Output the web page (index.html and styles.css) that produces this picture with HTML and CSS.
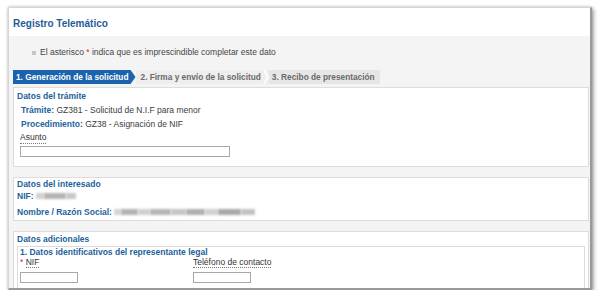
FILE: index.html
```html
<!DOCTYPE html>
<html lang="es">
<head>
<meta charset="utf-8">
<title>Registro Telemático</title>
<link rel="stylesheet" href="styles.css">
</head>
<body>
<div class="card">
  <div class="card-header">
    <h1 class="title">Registro Telemático</h1>
  </div>
  <div class="card-body">
    <p class="notice"><span class="bullet"></span><span>El asterisco <span class="req">*</span> indica que es imprescindible completar este dato</span></p>
    <div class="tabs">
      <span class="tab active">1. Generación de la solicitud</span>
      <span class="tab">2. Firma y envío de la solicitud</span>
      <svg class="sep" width="6" height="14" viewBox="0 0 6 14"><path d="M0.8 0 L5 7 L0.8 14" fill="none" stroke="#fff" stroke-width="1.5"/></svg>
      <span class="tab last">3. Recibo de presentación</span>
    </div>

    <section class="panel p1">
      <h2 class="panel-title">Datos del trámite</h2>
      <div class="row"><span class="lbl">Trámite:</span> GZ381 - Solicitud de N.I.F para menor</div>
      <div class="row"><span class="lbl">Procedimiento:</span> GZ38 - Asignación de NIF</div>
      <div class="field">
        <label class="flabel">Asunto</label>
        <span class="input wide"></span>
      </div>
    </section>

    <section class="panel p2">
      <h2 class="panel-title">Datos del interesado</h2>
      <div class="row2"><span class="lbl">NIF:</span><span class="blurs"><span class="blur n1"></span><span class="blur n2"></span><span class="blur n3"></span></span></div>
      <div class="row2 r-name"><span class="lbl">Nombre / Razón Social:</span><span class="blurs"><span class="blur b1"></span><span class="blur b2"></span><span class="blur b3"></span><span class="blur b4"></span><span class="blur b5"></span><span class="blur b6"></span><span class="blur b7"></span><span class="blur b8"></span><span class="blur b9"></span></span></div>
    </section>

    <section class="panel p3">
      <h2 class="panel-title">Datos adicionales</h2>
      <div class="sub">
        <h3 class="sub-title">1. Datos identificativos del representante legal</h3>
        <div class="cols">
          <div class="col">
            <label class="flabel2"><span class="req">*</span> <span class="u">NIF</span></label>
            <span class="input small"></span>
          </div>
          <div class="col">
            <label class="flabel2"><span class="u">Teléfono de contacto</span></label>
            <span class="input small"></span>
          </div>
        </div>
      </div>
    </section>
  </div>
</div>
</body>
</html>
```

FILE: styles.css
```css
* { box-sizing: border-box; }
html, body { margin: 0; padding: 0; background: #fff; }
body {
  font-family: "Liberation Sans", Arial, sans-serif;
  font-size: 8.5px;
  color: #3c3c3c;
}
.card {
  margin: 7px 0 0 8px;
  width: 584px;
  height: 283px;
  border: 1px solid #d6d6d6;
  border-right: 2px solid #9a9a9a;
  border-bottom: 2px solid #9a9a9a;
  box-shadow: 0 0 3px rgba(0,0,0,0.25), 2px 2px 4px rgba(0,0,0,0.3);
  overflow: hidden;
  background: #fff;
}
.card-header {
  height: 28px;
  padding: 9px 0 0 4px;
  background: #fff;
}
.title {
  margin: 0;
  font-size: 10px;
  line-height: 13px;
  font-weight: bold;
  color: #1f5c96;
}
.card-body {
  background: #f4f4f4;
  height: 260px;
  padding: 10px 1px 0 4px;
}
.notice {
  margin: 0 0 11px 0;
  padding-left: 19px;
  line-height: 13px;
  display: flex;
  align-items: center;
  color: #444;
}
.bullet {
  width: 4px;
  height: 4px;
  background: #c6c6c6;
  margin-right: 4px;
}
.req { color: #e0262d; }
.tabs {
  display: flex;
  align-items: center;
  height: 14px;
  margin-bottom: 3px;
}
.tab {
  height: 14px;
  line-height: 14px;
  font-size: 8.3px;
  font-weight: bold;
  color: #6a6a6a;
  padding: 0 2px 0 5px;
  background: #eeeeee;
  white-space: nowrap;
}
.tab.active {
  color: #fff;
  background: #1b63ad;
  padding: 0 7px 0 3px;
  clip-path: polygon(0 0, calc(100% - 5px) 0, 100% 50%, calc(100% - 5px) 100%, 0 100%);
}
.tab.last {
  background: #e6e6e6;
  padding: 0 5px 0 3px;
}
.sep { display: block; background: #eeeeee; }
.panel {
  background: #fff;
  border: 1px solid #dcdcdc;
  padding: 1px 3px 0 3px;
}
.panel-title {
  margin: 0;
  font-size: 8.5px;
  line-height: 13px;
  font-weight: bold;
  color: #215f9b;
}
.p1 { height: 80px; }
.p1 .panel-title { line-height: 14px; }
.p1 .row {
  padding-left: 4px;
  line-height: 14px;
}
.lbl { color: #2563a0; font-weight: bold; }
.field { padding-left: 3px; }
.flabel {
  display: inline-block;
  line-height: 11px;
  margin-top: 1px;
  border-bottom: 1px dotted #777;
  color: #333;
}
.input {
  display: block;
  height: 11px;
  border: 1px solid #a8a8a8;
  background: #fff;
}
.input.wide { width: 210px; margin-top: 2px; }
.input.small { width: 58px; margin-top: 4px; }
.p2 {
  margin-top: 10px;
  height: 44px;
  padding-top: 0;
}
.p2 .panel-title { line-height: 12px; }
.row2 {
  display: flex;
  align-items: center;
  line-height: 12px;
}
.r-name { margin-top: 3px; line-height: 14px; }
.blurs { display: flex; align-items: center; margin-left: 2px; }
.blur {
  display: inline-block;
  height: 6px;
  background: #b8b8b8;
  filter: blur(1px);
}
.n1 { width: 8px; background: #d2d2d2; }
.n2 { width: 22px; background: #b4b4b4; }
.n3 { width: 10px; background: #c8c8c8; }
.b1 { width: 7px; background: #d4d4d4; }
.b2 { width: 17px; background: #b2b2b2; }
.b3 { width: 12px; background: #cfcfcf; }
.b4 { width: 21px; background: #b6b6b6; }
.b5 { width: 15px; background: #c6c6c6; }
.b6 { width: 19px; background: #b0b0b0; }
.b7 { width: 13px; background: #d0d0d0; }
.b8 { width: 23px; background: #a9a9a9; }
.b9 { width: 14px; background: #c2c2c2; }
.p3 {
  margin-top: 10px;
  height: 70px;
  padding: 1px 3px 0 3px;
}
.p3 .panel-title { line-height: 13px; }
.sub {
  border: 1px solid #dcdcdc;
  padding: 0 2px 4px 2px;
  height: 43px;
}
.sub-title {
  margin: 0;
  font-size: 8.5px;
  line-height: 10px;
  font-weight: bold;
  color: #215f9b;
}
.cols {
  display: grid;
  grid-template-columns: 173px 200px;
}
.flabel2 { display: block; line-height: 11px; }
.u { border-bottom: 1px dotted #777; color: #333; }
```
